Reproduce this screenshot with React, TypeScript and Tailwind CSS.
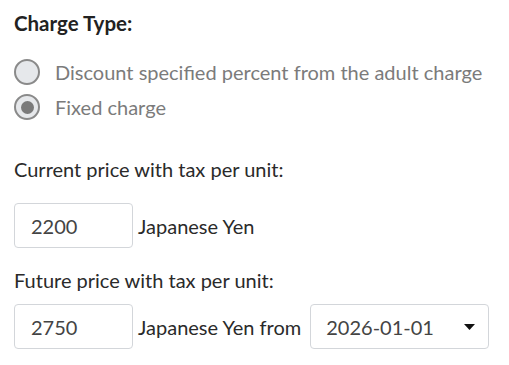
import { useState } from "react";

const Radio = ({ checked, label, onClick }: { checked: boolean; label: string; onClick: () => void }) => (
  <label className="flex items-center gap-[15px] cursor-pointer" onClick={onClick}>
    <span className="flex h-[26px] w-[26px] shrink-0 items-center justify-center rounded-full border-2 border-[#8a8a8a] bg-[#e6e8eb]">
      {checked && <span className="h-[13px] w-[13px] rounded-full bg-[#7a7a7a]" />}
    </span>
    <span className="text-[20px] leading-[26px] text-[#7b7b7b]">{label}</span>
  </label>
);

const App = () => {
  const [type, setType] = useState("fixed");

  return (
    <div className="w-[509px] h-[365px] bg-white px-[14px] pt-[10px] text-[#2a2a2a]" style={{ fontFamily: "Lato, 'Open Sans', sans-serif" }}>
      <h3 className="text-[20.5px] font-bold text-[#222] leading-[26px]">Charge Type:</h3>

      <div className="mt-[23px] flex flex-col gap-[9px]">
        <Radio checked={type === "discount"} label="Discount specified percent from the adult charge" onClick={() => setType("discount")} />
        <Radio checked={type === "fixed"} label="Fixed charge" onClick={() => setType("fixed")} />
      </div>

      <p className="mt-[36px] text-[20px] leading-[26px]">Current price with tax per unit:</p>
      <div className="mt-[21px] flex items-center gap-[5px]">
        <input
          defaultValue="2200"
          className="h-[45px] w-[119px] rounded-[4px] border border-[#d3d6da] px-[16px] text-[20px] text-[#444] outline-none"
        />
        <span className="text-[20px]">Japanese Yen</span>
      </div>

      <p className="mt-[19px] text-[20px] leading-[26px]">Future price with tax per unit:</p>
      <div className="mt-[11px] flex items-center gap-[5px]">
        <input
          defaultValue="2750"
          className="h-[45px] w-[119px] rounded-[4px] border border-[#d3d6da] px-[16px] text-[20px] text-[#444] outline-none"
        />
        <span className="text-[20px] whitespace-nowrap">Japanese Yen from</span>
        <div className="ml-[4px] flex h-[45px] w-[179px] shrink-0 items-center justify-between rounded-[4px] border border-[#d3d6da] pl-[15px] pr-[13px]">
          <span className="text-[20px] text-[#444]">2026-01-01</span>
          <svg width="11" height="6" viewBox="0 0 11 6"><path d="M0 0h11L5.5 6z" fill="#111" /></svg>
        </div>
      </div>
    </div>
  );
};

export default App;
